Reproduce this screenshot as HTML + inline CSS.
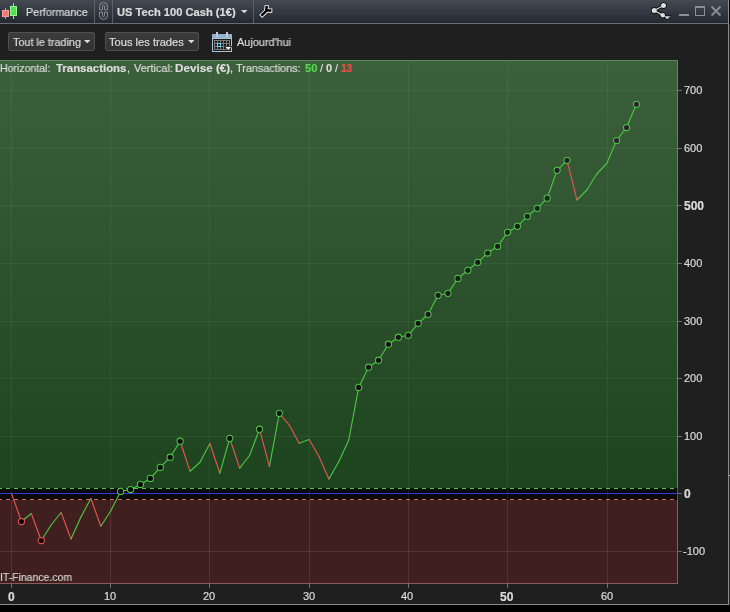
<!DOCTYPE html>
<html><head><meta charset="utf-8"><style>
*{margin:0;padding:0;box-sizing:border-box}
html,body{width:730px;height:612px;overflow:hidden;background:#000;font-family:"Liberation Sans",sans-serif;}
.abs{position:absolute}
.tx{position:absolute;white-space:nowrap;font-size:11px;line-height:13px;color:#dcdcdc;transform-origin:0 0;will-change:transform;-webkit-text-stroke:0.2px currentColor}
#title{position:absolute;left:0;top:0;width:728px;height:23px;background:linear-gradient(#434a52,#242930);}
#titleline{position:absolute;left:0;top:23px;width:728px;height:1px;background:#686e75}
#tool{position:absolute;left:0;top:24px;width:728px;height:580px;background:#1f1f1f}
.sep{position:absolute;top:0;width:1px;height:23px;background:#5a6066}
.btn{position:absolute;top:32px;height:19px;border:1px solid #505050;border-radius:2px;background:linear-gradient(#3b3b3b,#323232)}
</style></head><body>
<div id="title"></div><div id="titleline"></div>
<div id="tool"></div>
<div class="abs" style="left:728px;top:0px;width:1px;height:605px;background:#8c8c8c"></div>
<div class="abs" style="left:0;top:604px;width:729px;height:1px;background:#8c8c8c"></div>
<div class="abs" style="left:729px;top:24px;width:1px;height:581px;background:#262626"></div>
<div class="abs" style="left:729px;top:475px;width:1px;height:1px;background:#ddd"></div>
<svg width="730" height="612" style="position:absolute;left:0;top:0">
<defs>
<linearGradient id="gbg" x1="0" y1="0" x2="0" y2="1">
<stop offset="0" stop-color="#3b603b"/><stop offset="1" stop-color="#1e441f"/>
</linearGradient>
</defs>
<rect x="0" y="60" width="678" height="428" fill="url(#gbg)"/>
<rect x="0" y="488" width="678" height="12" fill="#0a0a0a"/>
<rect x="0" y="500" width="678" height="84" fill="#40201e"/>
<rect x="0" y="60" width="678" height="1" fill="#5e8a5e"/>
<rect x="677" y="60" width="1" height="428" fill="#5e8a5e"/>
<rect x="677" y="488" width="1" height="12" fill="#555"/>
<rect x="677" y="500" width="1" height="84" fill="#8a5c5c"/>
<rect x="0" y="583" width="678" height="1" fill="#8a5c5c"/>
<rect x="11" y="61" width="1" height="427" fill="rgba(220,255,220,0.06)"/><rect x="11" y="488" width="1" height="12" fill="rgba(255,255,255,0.08)"/><rect x="11" y="500" width="1" height="83" fill="rgba(255,235,235,0.1)"/><rect x="110" y="61" width="1" height="427" fill="rgba(220,255,220,0.06)"/><rect x="110" y="488" width="1" height="12" fill="rgba(255,255,255,0.08)"/><rect x="110" y="500" width="1" height="83" fill="rgba(255,235,235,0.1)"/><rect x="209" y="61" width="1" height="427" fill="rgba(220,255,220,0.06)"/><rect x="209" y="488" width="1" height="12" fill="rgba(255,255,255,0.08)"/><rect x="209" y="500" width="1" height="83" fill="rgba(255,235,235,0.1)"/><rect x="309" y="61" width="1" height="427" fill="rgba(220,255,220,0.06)"/><rect x="309" y="488" width="1" height="12" fill="rgba(255,255,255,0.08)"/><rect x="309" y="500" width="1" height="83" fill="rgba(255,235,235,0.1)"/><rect x="408" y="61" width="1" height="427" fill="rgba(220,255,220,0.06)"/><rect x="408" y="488" width="1" height="12" fill="rgba(255,255,255,0.08)"/><rect x="408" y="500" width="1" height="83" fill="rgba(255,235,235,0.1)"/><rect x="507" y="61" width="1" height="427" fill="rgba(220,255,220,0.06)"/><rect x="507" y="488" width="1" height="12" fill="rgba(255,255,255,0.08)"/><rect x="507" y="500" width="1" height="83" fill="rgba(255,235,235,0.1)"/><rect x="607" y="61" width="1" height="427" fill="rgba(220,255,220,0.06)"/><rect x="607" y="488" width="1" height="12" fill="rgba(255,255,255,0.08)"/><rect x="607" y="500" width="1" height="83" fill="rgba(255,235,235,0.1)"/><rect x="0" y="90" width="677" height="1" fill="rgba(220,255,220,0.06)"/><rect x="0" y="148" width="677" height="1" fill="rgba(220,255,220,0.06)"/><rect x="0" y="205" width="677" height="1" fill="rgba(220,255,220,0.06)"/><rect x="0" y="263" width="677" height="1" fill="rgba(220,255,220,0.06)"/><rect x="0" y="321" width="677" height="1" fill="rgba(220,255,220,0.06)"/><rect x="0" y="378" width="677" height="1" fill="rgba(220,255,220,0.06)"/><rect x="0" y="436" width="677" height="1" fill="rgba(220,255,220,0.06)"/><rect x="0" y="551" width="677" height="1" fill="rgba(255,235,235,0.1)"/>
<line x1="0" y1="488.5" x2="677" y2="488.5" stroke="#4ccc44" stroke-dasharray="4 4" stroke-dashoffset="2"/>
<line x1="0" y1="499.5" x2="677" y2="499.5" stroke="#dd6862" stroke-dasharray="4 4" stroke-dashoffset="2"/>
<rect x="0" y="493" width="677" height="1" fill="#3434e0"/>
<rect x="11" y="584" width="1" height="4" fill="#707070"/><rect x="110" y="584" width="1" height="4" fill="#707070"/><rect x="209" y="584" width="1" height="4" fill="#707070"/><rect x="309" y="584" width="1" height="4" fill="#707070"/><rect x="408" y="584" width="1" height="4" fill="#707070"/><rect x="507" y="584" width="1" height="4" fill="#707070"/><rect x="607" y="584" width="1" height="4" fill="#707070"/><rect x="678" y="90" width="4" height="1" fill="#707070"/><rect x="678" y="148" width="4" height="1" fill="#707070"/><rect x="678" y="205" width="4" height="1" fill="#707070"/><rect x="678" y="263" width="4" height="1" fill="#707070"/><rect x="678" y="321" width="4" height="1" fill="#707070"/><rect x="678" y="378" width="4" height="1" fill="#707070"/><rect x="678" y="436" width="4" height="1" fill="#707070"/><rect x="678" y="551" width="4" height="1" fill="#707070"/><rect x="678" y="493" width="4" height="1" fill="#707070"/>
<g stroke-width="1.15" fill="none" stroke-linecap="round"><line x1="11.50" y1="493.50" x2="21.42" y2="521.50" stroke="#e65252"/><line x1="21.42" y1="521.50" x2="31.34" y2="513.50" stroke="#4cc444"/><line x1="31.34" y1="513.50" x2="41.26" y2="540.50" stroke="#e65252"/><line x1="41.26" y1="540.50" x2="51.18" y2="525.00" stroke="#4cc444"/><line x1="51.18" y1="525.00" x2="61.10" y2="512.50" stroke="#4cc444"/><line x1="61.10" y1="512.50" x2="71.02" y2="539.00" stroke="#e65252"/><line x1="71.02" y1="539.00" x2="80.94" y2="517.00" stroke="#4cc444"/><line x1="80.94" y1="517.00" x2="90.86" y2="498.50" stroke="#4cc444"/><line x1="90.86" y1="498.50" x2="100.78" y2="526.20" stroke="#e65252"/><line x1="100.78" y1="526.20" x2="110.70" y2="511.00" stroke="#4cc444"/><line x1="110.70" y1="511.00" x2="120.62" y2="491.40" stroke="#4cc444"/><line x1="120.62" y1="491.40" x2="130.54" y2="489.50" stroke="#4cc444"/><line x1="130.54" y1="489.50" x2="140.46" y2="484.40" stroke="#4cc444"/><line x1="140.46" y1="484.40" x2="150.38" y2="478.40" stroke="#4cc444"/><line x1="150.38" y1="478.40" x2="160.30" y2="467.40" stroke="#4cc444"/><line x1="160.30" y1="467.40" x2="170.22" y2="457.20" stroke="#4cc444"/><line x1="170.22" y1="457.20" x2="180.14" y2="441.20" stroke="#4cc444"/><line x1="180.14" y1="441.20" x2="190.06" y2="471.20" stroke="#e65252"/><line x1="190.06" y1="471.20" x2="199.98" y2="462.20" stroke="#4cc444"/><line x1="199.98" y1="462.20" x2="209.90" y2="443.50" stroke="#4cc444"/><line x1="209.90" y1="443.50" x2="219.82" y2="473.20" stroke="#e65252"/><line x1="219.82" y1="473.20" x2="229.74" y2="438.30" stroke="#4cc444"/><line x1="229.74" y1="438.30" x2="239.66" y2="468.20" stroke="#e65252"/><line x1="239.66" y1="468.20" x2="249.58" y2="455.50" stroke="#4cc444"/><line x1="249.58" y1="455.50" x2="259.50" y2="429.20" stroke="#4cc444"/><line x1="259.50" y1="429.20" x2="269.42" y2="466.40" stroke="#e65252"/><line x1="269.42" y1="466.40" x2="279.34" y2="413.30" stroke="#4cc444"/><line x1="279.34" y1="413.30" x2="289.26" y2="425.00" stroke="#e65252"/><line x1="289.26" y1="425.00" x2="299.18" y2="443.20" stroke="#e65252"/><line x1="299.18" y1="443.20" x2="309.10" y2="439.50" stroke="#4cc444"/><line x1="309.10" y1="439.50" x2="319.02" y2="456.50" stroke="#e65252"/><line x1="319.02" y1="456.50" x2="328.94" y2="479.00" stroke="#e65252"/><line x1="328.94" y1="479.00" x2="338.86" y2="461.50" stroke="#4cc444"/><line x1="338.86" y1="461.50" x2="348.78" y2="440.00" stroke="#4cc444"/><line x1="348.78" y1="440.00" x2="358.70" y2="387.40" stroke="#4cc444"/><line x1="358.70" y1="387.40" x2="368.62" y2="367.20" stroke="#4cc444"/><line x1="368.62" y1="367.20" x2="378.54" y2="360.20" stroke="#4cc444"/><line x1="378.54" y1="360.20" x2="388.46" y2="344.20" stroke="#4cc444"/><line x1="388.46" y1="344.20" x2="398.38" y2="337.20" stroke="#4cc444"/><line x1="398.38" y1="337.20" x2="408.30" y2="335.30" stroke="#4cc444"/><line x1="408.30" y1="335.30" x2="418.22" y2="323.30" stroke="#4cc444"/><line x1="418.22" y1="323.30" x2="428.14" y2="314.30" stroke="#4cc444"/><line x1="428.14" y1="314.30" x2="438.06" y2="295.30" stroke="#4cc444"/><line x1="438.06" y1="295.30" x2="447.98" y2="293.30" stroke="#4cc444"/><line x1="447.98" y1="293.30" x2="457.90" y2="278.40" stroke="#4cc444"/><line x1="457.90" y1="278.40" x2="467.82" y2="270.30" stroke="#4cc444"/><line x1="467.82" y1="270.30" x2="477.74" y2="262.30" stroke="#4cc444"/><line x1="477.74" y1="262.30" x2="487.66" y2="253.00" stroke="#4cc444"/><line x1="487.66" y1="253.00" x2="497.58" y2="246.30" stroke="#4cc444"/><line x1="497.58" y1="246.30" x2="507.50" y2="232.30" stroke="#4cc444"/><line x1="507.50" y1="232.30" x2="517.42" y2="226.30" stroke="#4cc444"/><line x1="517.42" y1="226.30" x2="527.34" y2="216.30" stroke="#4cc444"/><line x1="527.34" y1="216.30" x2="537.26" y2="208.30" stroke="#4cc444"/><line x1="537.26" y1="208.30" x2="547.18" y2="198.20" stroke="#4cc444"/><line x1="547.18" y1="198.20" x2="557.10" y2="170.30" stroke="#4cc444"/><line x1="557.10" y1="170.30" x2="567.02" y2="160.30" stroke="#4cc444"/><line x1="567.02" y1="160.30" x2="576.94" y2="200.00" stroke="#e65252"/><line x1="576.94" y1="200.00" x2="586.86" y2="190.00" stroke="#4cc444"/><line x1="586.86" y1="190.00" x2="596.78" y2="174.00" stroke="#4cc444"/><line x1="596.78" y1="174.00" x2="606.70" y2="163.50" stroke="#4cc444"/><line x1="606.70" y1="163.50" x2="616.62" y2="140.50" stroke="#4cc444"/><line x1="616.62" y1="140.50" x2="626.54" y2="127.50" stroke="#4cc444"/><line x1="626.54" y1="127.50" x2="636.46" y2="104.30" stroke="#4cc444"/></g>
<g stroke-width="1.05" fill="#1e1c20"><circle cx="21.42" cy="521.50" r="3.1" stroke="#e65252" fill="#050505"/><circle cx="41.26" cy="540.50" r="3.1" stroke="#e65252" fill="#050505"/><circle cx="120.62" cy="491.40" r="3.1" stroke="#4cc444" fill="#0a0a0a"/><circle cx="130.54" cy="489.50" r="3.1" stroke="#4cc444" fill="#0a0a0a"/><circle cx="140.46" cy="484.40" r="3.1" stroke="#4cc444" fill="#0a0a0a"/><circle cx="150.38" cy="478.40" r="3.1" stroke="#4cc444" fill="#0b0a0b"/><circle cx="160.30" cy="467.40" r="3.1" stroke="#4cc444" fill="#0b0b0c"/><circle cx="170.22" cy="457.20" r="3.1" stroke="#4cc444" fill="#0c0c0d"/><circle cx="180.14" cy="441.20" r="3.1" stroke="#4cc444" fill="#0e0d0e"/><circle cx="229.74" cy="438.30" r="3.1" stroke="#4cc444" fill="#0e0e0f"/><circle cx="259.50" cy="429.20" r="3.1" stroke="#4cc444" fill="#0f0e0f"/><circle cx="279.34" cy="413.30" r="3.1" stroke="#4cc444" fill="#100f11"/><circle cx="358.70" cy="387.40" r="3.1" stroke="#4cc444" fill="#131114"/><circle cx="368.62" cy="367.20" r="3.1" stroke="#4cc444" fill="#141316"/><circle cx="378.54" cy="360.20" r="3.1" stroke="#4cc444" fill="#151416"/><circle cx="388.46" cy="344.20" r="3.1" stroke="#4cc444" fill="#161518"/><circle cx="398.38" cy="337.20" r="3.1" stroke="#4cc444" fill="#171519"/><circle cx="408.30" cy="335.30" r="3.1" stroke="#4cc444" fill="#171619"/><circle cx="418.22" cy="323.30" r="3.1" stroke="#4cc444" fill="#18161a"/><circle cx="428.14" cy="314.30" r="3.1" stroke="#4cc444" fill="#19171b"/><circle cx="438.06" cy="295.30" r="3.1" stroke="#4cc444" fill="#1b191d"/><circle cx="447.98" cy="293.30" r="3.1" stroke="#4cc444" fill="#1b191d"/><circle cx="457.90" cy="278.40" r="3.1" stroke="#4cc444" fill="#1c1a1e"/><circle cx="467.82" cy="270.30" r="3.1" stroke="#4cc444" fill="#1d1b1f"/><circle cx="477.74" cy="262.30" r="3.1" stroke="#4cc444" fill="#1e1b20"/><circle cx="487.66" cy="253.00" r="3.1" stroke="#4cc444" fill="#1e1c21"/><circle cx="497.58" cy="246.30" r="3.1" stroke="#4cc444" fill="#1f1c21"/><circle cx="507.50" cy="232.30" r="3.1" stroke="#4cc444" fill="#201e23"/><circle cx="517.42" cy="226.30" r="3.1" stroke="#4cc444" fill="#211e23"/><circle cx="527.34" cy="216.30" r="3.1" stroke="#4cc444" fill="#221f24"/><circle cx="537.26" cy="208.30" r="3.1" stroke="#4cc444" fill="#221f25"/><circle cx="547.18" cy="198.20" r="3.1" stroke="#4cc444" fill="#232026"/><circle cx="557.10" cy="170.30" r="3.1" stroke="#4cc444" fill="#262229"/><circle cx="567.02" cy="160.30" r="3.1" stroke="#4cc444" fill="#27232a"/><circle cx="616.62" cy="140.50" r="3.1" stroke="#4cc444" fill="#28252c"/><circle cx="626.54" cy="127.50" r="3.1" stroke="#4cc444" fill="#29262d"/><circle cx="636.46" cy="104.30" r="3.1" stroke="#4cc444" fill="#2b272f"/></g>
</svg>
<div class="sep" style="left:94px"></div><div class="sep" style="left:112px"></div><div class="sep" style="left:253px"></div>
<div class="btn" style="left:8px;width:87px"></div>
<div class="btn" style="left:105px;width:94px"></div>

<svg style="position:absolute;left:0;top:0" width="730" height="60">
<rect x="5" y="8" width="1" height="11" fill="#f49090"/>
<rect x="2" y="10" width="7" height="7" fill="#ff9c9c"/>
<rect x="3" y="11" width="5" height="5" fill="#e87a7a"/>
<rect x="13" y="3" width="1" height="16" fill="#7cf27c"/>
<rect x="10" y="6" width="7" height="10" fill="#8aff8a"/>
<rect x="11" y="7" width="5" height="8" fill="#5ada5a"/>
<g fill="none" stroke="#8a8e93" stroke-width="1">
<path d="M99.5,9.8 V6.5 A4,4 0 0 1 107.5,6.5 V9.8 H104.5 V6.2 A1,1 0 0 0 102.5,6.2 V9.8 Z"/>
<path d="M99.5,12.2 V15.5 A4,4 0 0 0 107.5,15.5 V12.2 H104.5 V15.8 A1,1 0 0 1 102.5,15.8 V12.2 Z"/>
</g>
<path d="M241,10 L247.5,10 L244.25,13.2 Z" fill="#d8d8d8"/>
<g fill="none" stroke-linecap="square">
<path d="M262.2,15 L266.3,11 L266.6,7.2 M266.3,10.6 L270.2,10.6" stroke="#fff" stroke-width="4.2"/>
<path d="M262.2,15 L266.3,11 L266.6,7.2 M266.3,10.6 L270.2,10.6" stroke="#000" stroke-width="2.5"/>
</g>
<g stroke="#000" stroke-width="3" fill="#000">
<line x1="654.2" y1="10.5" x2="663.5" y2="5.5"/><line x1="654.2" y1="10.5" x2="662.9" y2="15.4"/>
<circle cx="663.5" cy="5.5" r="3.2" stroke="none"/><circle cx="654.2" cy="10.5" r="3.2" stroke="none"/><circle cx="662.8" cy="15.3" r="2.9" stroke="none"/>
<path d="M663,15.5 L671.5,15.5 L667.2,20 Z" stroke="none"/>
</g>
<g stroke="#dcdcdc" stroke-width="1.3" fill="#dcdcdc">
<line x1="654.2" y1="10.5" x2="663.5" y2="5.5"/><line x1="654.2" y1="10.5" x2="662.9" y2="15.4"/>
<circle cx="663.5" cy="5.5" r="2.5" stroke="none"/><circle cx="654.2" cy="10.5" r="2.5" stroke="none"/><circle cx="662.8" cy="15.3" r="2.2" stroke="none"/>
</g>
<path d="M664,16.2 L670.5,16.2 L667.2,19.2 Z" fill="#dcdcdc"/>
<rect x="679" y="14" width="10" height="2" fill="#8a9097"/>
<rect x="695.5" y="6.5" width="9" height="9" fill="none" stroke="#8a9097" stroke-width="1"/>
<rect x="695" y="6" width="10" height="2" fill="#8a9097"/>
<path d="M711.5,6.5 L720.5,15.5 M720.5,6.5 L711.5,15.5" stroke="#8a9097" stroke-width="1.8"/>
<path d="M84,40 L90.5,40 L87.25,43.3 Z" fill="#dcdcdc"/>
<path d="M188,40 L194.5,40 L191.25,43.3 Z" fill="#dcdcdc"/>
<rect x="212" y="34" width="20" height="18" fill="#a9c3da" />
<rect x="212" y="34" width="20" height="4" fill="#8fb3c8"/>
<rect x="213" y="39" width="18" height="12" fill="#1a1a1a"/>
<rect x="214" y="40" width="16" height="10" fill="#7a7a7a"/>
<g fill="#1a1a1a">
<rect x="215" y="41" width="2" height="2"/><rect x="218" y="41" width="2" height="2"/><rect x="221" y="41" width="2" height="2"/><rect x="224" y="41" width="2" height="2"/><rect x="227" y="41" width="2" height="2"/>
<rect x="215" y="44" width="2" height="2"/><rect x="218" y="44" width="2" height="2"/><rect x="221" y="44" width="2" height="2"/><rect x="224" y="44" width="2" height="2"/><rect x="227" y="44" width="2" height="2"/>
<rect x="215" y="47" width="2" height="2"/><rect x="218" y="47" width="2" height="2"/><rect x="221" y="47" width="2" height="2"/><rect x="224" y="47" width="2" height="2"/><rect x="227" y="47" width="2" height="2"/>
</g>
<rect x="217.5" y="43.5" width="3" height="3" fill="none" stroke="#5fd8f8" stroke-width="1"/>
<rect x="216" y="32" width="2" height="5" fill="#cbc3d8"/><rect x="226" y="32" width="2" height="5" fill="#cbc3d8"/>
<path d="M224.5,46.5 L232,46.5 L228.2,50.5 Z" fill="#f4f4f4" stroke="#111" stroke-width="0.7"/>
</svg>

<div class="tx" style="left:25.52px;top:6px;color:#dcdcdc;transform:scaleX(0.9821);">Performance</div><div class="tx" style="left:117.12px;top:6px;font-weight:bold;color:#dcdcdc;transform:scaleX(1.0123);">US Tech 100 Cash (1€)</div><div class="tx" style="left:13.12px;top:36px;color:#dcdcdc;transform:scaleX(0.9839);">Tout le trading</div><div class="tx" style="left:109.44px;top:36px;color:#dcdcdc;transform:scaleX(1.0110);">Tous les trades</div><div class="tx" style="left:237.00px;top:36px;color:#dcdcdc;transform:scaleX(0.9884);">Aujourd'hui</div><div class="tx" style="left:-0.48px;top:62px;color:#dcdcdc;transform:scaleX(0.9561);">Horizontal:</div><div class="tx" style="left:56.06px;top:62px;font-weight:bold;color:#dcdcdc;transform:scaleX(1.0378);">Transactions</div><div class="tx" style="left:127.44px;top:62px;color:#dcdcdc;">,</div><div class="tx" style="left:133.62px;top:62px;color:#dcdcdc;transform:scaleX(0.9921);">Vertical:</div><div class="tx" style="left:175.20px;top:62px;font-weight:bold;color:#dcdcdc;transform:scaleX(1.0631);">Devise (€)</div><div class="tx" style="left:230.38px;top:62px;color:#dcdcdc;">,</div><div class="tx" style="left:235.88px;top:62px;color:#dcdcdc;transform:scaleX(0.9853);">Transactions:</div><div class="tx" style="left:304.50px;top:62px;font-weight:bold;color:#55d84c;transform:scaleX(1.0167);">50</div><div class="tx" style="left:319.64px;top:62px;color:#dcdcdc;">/</div><div class="tx" style="left:325.52px;top:62px;font-weight:bold;color:#dcdcdc;">0</div><div class="tx" style="left:334.90px;top:62px;color:#dcdcdc;">/</div><div class="tx" style="left:341.12px;top:62px;font-weight:bold;color:#f84c4a;transform:scaleX(0.9229);">13</div><div class="tx" style="left:0.02px;top:571px;color:#d4d4d4;transform:scaleX(0.9505);">IT-Finance.com</div>
<div class="tx" style="left:684px;top:84px;">700</div><div class="tx" style="left:684px;top:142px;">600</div><div class="tx" style="left:684px;top:200px;font-weight:bold;font-size:12px;">500</div><div class="tx" style="left:684px;top:257px;">400</div><div class="tx" style="left:684px;top:315px;">300</div><div class="tx" style="left:684px;top:372px;">200</div><div class="tx" style="left:684px;top:430px;">100</div><div class="tx" style="left:683.5px;top:488px;font-weight:bold;font-size:12px;">0</div><div class="tx" style="left:683px;top:545px;">-100</div><div class="tx" style="left:7.5px;top:591px;font-weight:bold;font-size:12px;">0</div><div class="tx" style="left:104px;top:590px;">10</div><div class="tx" style="left:203px;top:590px;">20</div><div class="tx" style="left:302.5px;top:590px;">30</div><div class="tx" style="left:401px;top:590px;">40</div><div class="tx" style="left:499.5px;top:591px;font-weight:bold;font-size:12px;">50</div><div class="tx" style="left:601px;top:590px;">60</div>
</body></html>
